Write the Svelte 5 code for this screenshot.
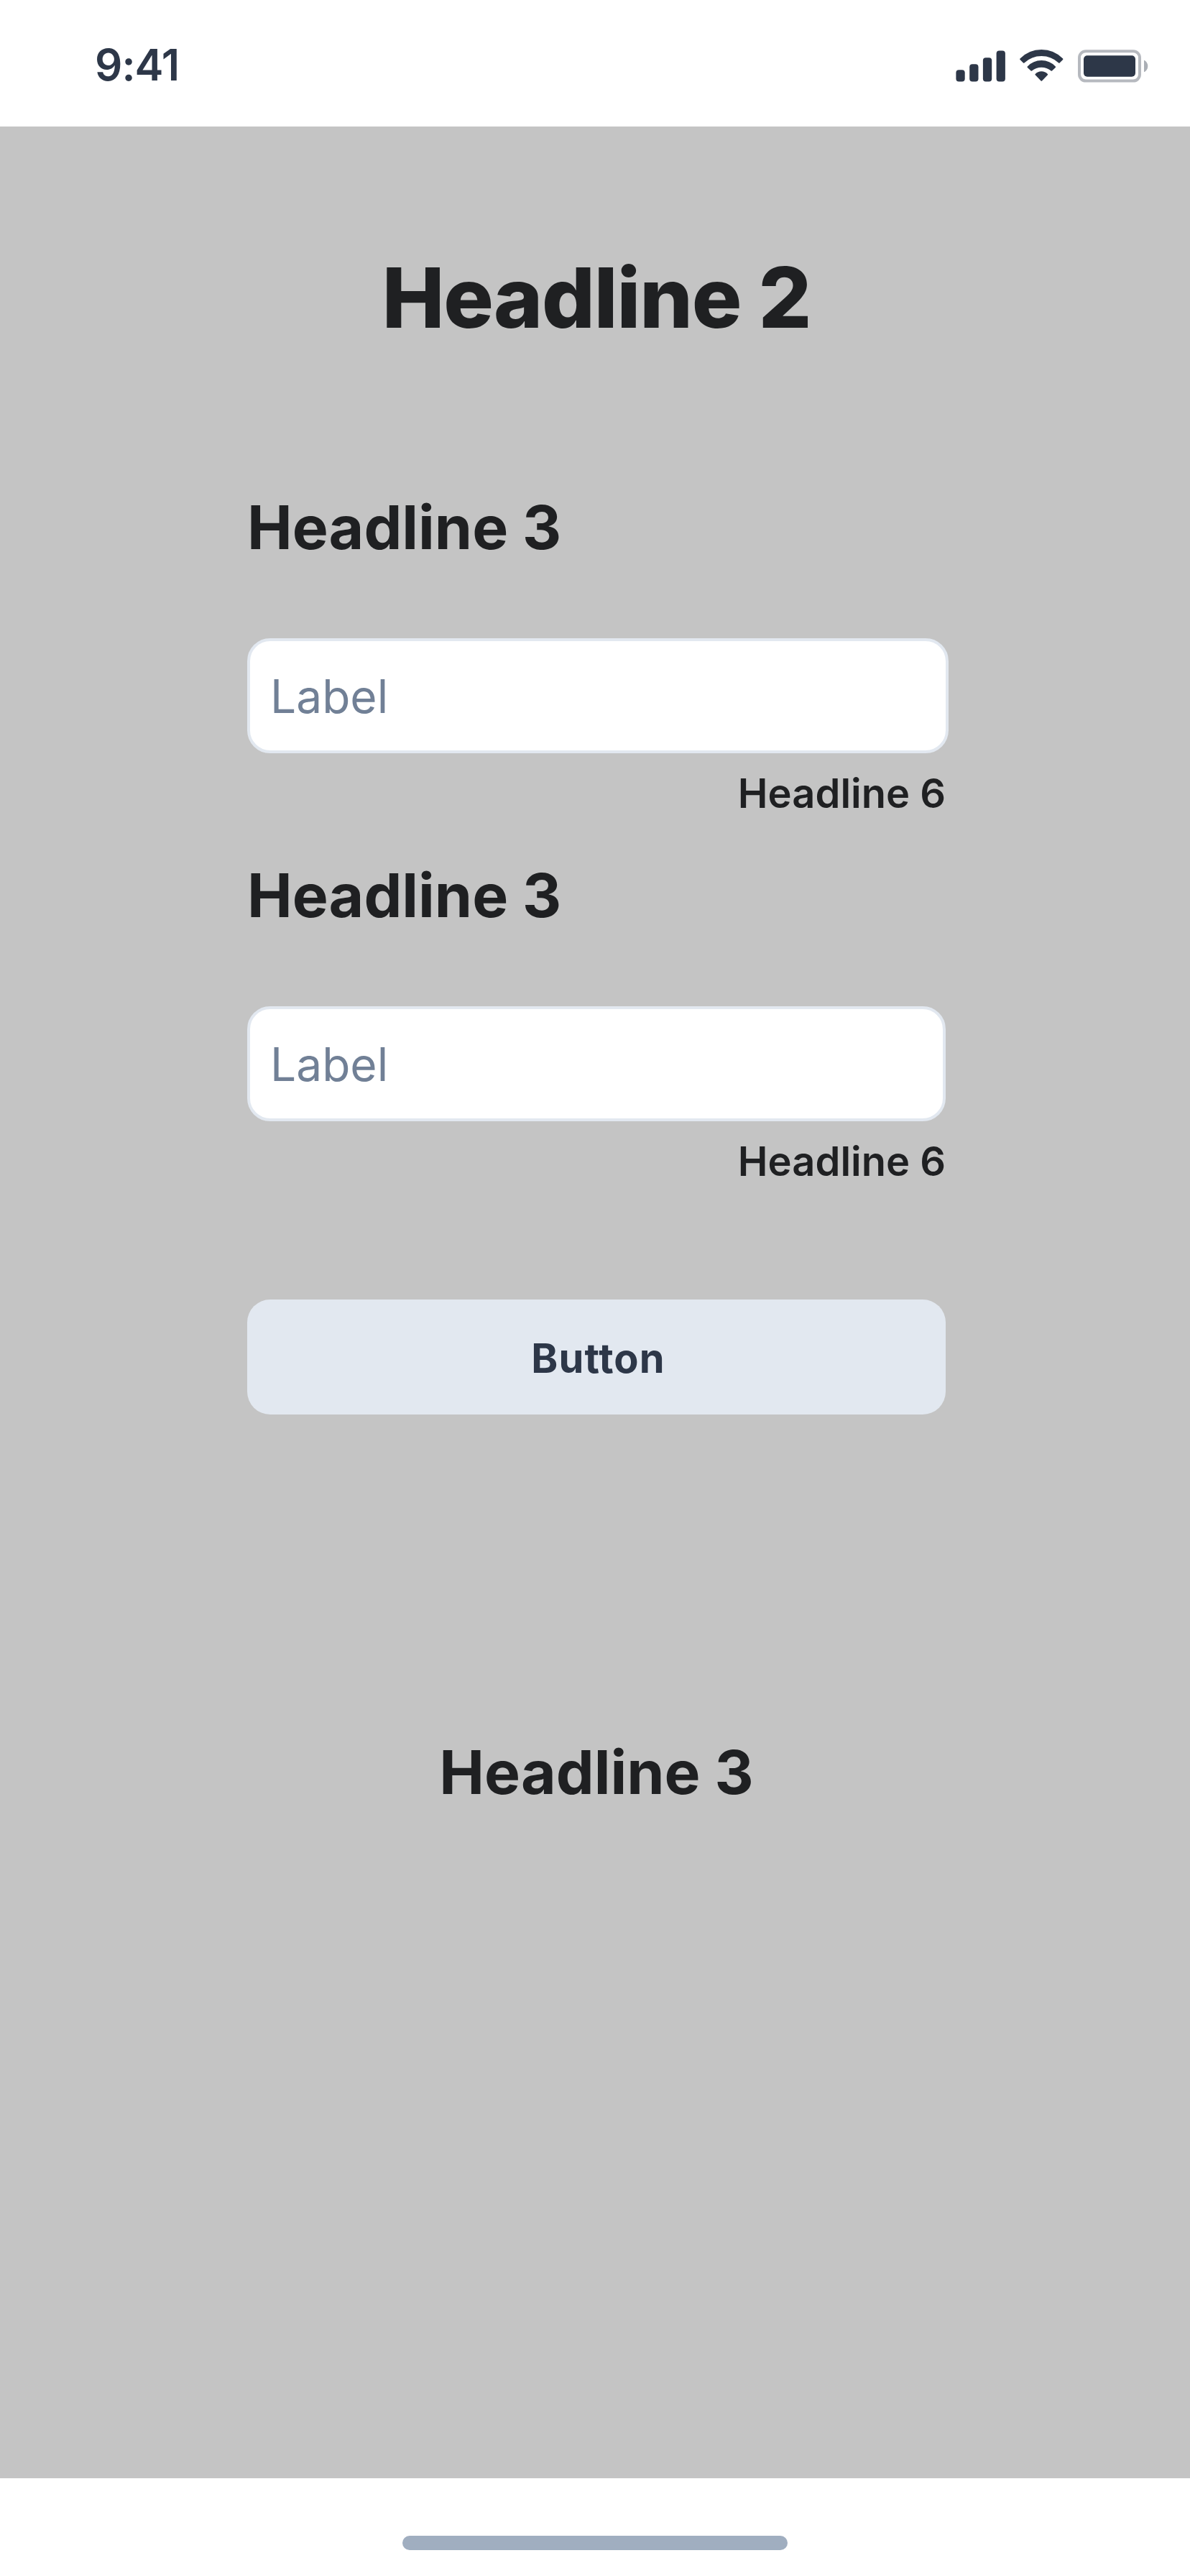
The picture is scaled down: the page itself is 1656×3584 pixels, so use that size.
<script>
  const fields = [
    { title: 'Headline 3', label: 'Label', hint: 'Headline 6', wide: true },
    { title: 'Headline 3', label: 'Label', hint: 'Headline 6', wide: false }
  ];
</script>

<div class="screen">
  <header class="status">
    <span class="time">9:41</span>
    <div class="indicators">
      <svg class="signal" width="69" height="44" viewBox="0 0 69 44" aria-hidden="true">
        <rect x="0.4" y="27.2" width="12.3" height="16.2" rx="4" />
        <rect x="19.2" y="19.2" width="12.3" height="24.2" rx="4" />
        <rect x="37.9" y="10.2" width="12.3" height="33.2" rx="4" />
        <rect x="56.6" y="0.4" width="12.3" height="43" rx="4" />
      </svg>
      <svg class="wifi" width="63" height="46" viewBox="0 0 63 46" aria-hidden="true">
        <path d="M2.2 14.3A40.8 40.8 0 0 1 60.4 14.3L55.9 18.8A35.8 35.8 0 0 0 6.7 18.8Z" />
        <path d="M12.5 25.2A25.6 25.6 0 0 1 50.1 25.2L45.3 29.8A21.8 21.8 0 0 0 17.3 29.8Z" />
        <path d="M23.4 35.6A11.1 11.1 0 0 1 39.2 35.6L31.3 43.8Z" />
      </svg>
      <svg class="battery" width="98" height="46" viewBox="0 0 98 46" aria-hidden="true">
        <rect class="shell" x="2" y="2.2" width="84" height="41.4" rx="9" />
        <rect class="charge" x="8" y="8.2" width="72" height="29.6" rx="5" />
        <path class="cap" d="M92 14.7C95.2 16 97.3 19.3 97.3 23S95.2 30 92 31.3Z" />
      </svg>
    </div>
  </header>

  <main>
    <h2>Headline 2</h2>
    {#each fields as field}
      <section class="field">
        <h3>{field.title}</h3>
        <div class="input" class:wide={field.wide}>{field.label}</div>
        <h6>{field.hint}</h6>
      </section>
    {/each}
    <button type="button">Button</button>
    <h3 class="footer-title">Headline 3</h3>
  </main>

  <footer><div class="home"></div></footer>
</div>

<style>
  .screen {
    display: flex;
    flex-direction: column;
    width: 1656px;
    height: 3584px;
    background: #fff;
    color: #1f2022;
    font-family: Inter, sans-serif;
  }
  .status {
    display: flex;
    flex: none;
    justify-content: space-between;
    align-items: flex-start;
    box-sizing: border-box;
    height: 176px;
    padding: 54px 58px 0 132px;
    color: #2d3748;
  }
  .time {
    font-size: 60px;
    font-weight: 600;
    line-height: 72px;
    letter-spacing: -0.96px;
  }
  .indicators {
    display: flex;
    align-items: flex-start;
    padding-top: 15px;
  }
  svg {
    display: block;
    fill: #2d3748;
  }
  .signal {
    margin: 1px 19px 0 0;
  }
  .wifi {
    margin: -1px 19px 0 0;
    stroke: #2d3748;
    stroke-width: 2;
    stroke-linejoin: round;
  }
  .shell {
    fill: none;
    stroke: #2d3748;
    stroke-width: 4;
    opacity: 0.35;
  }
  .cap {
    opacity: 0.4;
  }
  main {
    display: flex;
    flex: 1;
    flex-direction: column;
    padding: 168px 340px 0 344px;
    background: #c4c4c4;
  }
  h2,
  h3,
  h6 {
    margin: 0;
  }
  h2 {
    margin-bottom: 199px;
    font-size: 116px;
    font-weight: 800;
    line-height: 140px;
    letter-spacing: -0.01em;
    text-align: center;
  }
  h3 {
    font-size: 84px;
    font-weight: 700;
    line-height: 101px;
  }
  h6 {
    margin-top: 22px;
    font-size: 56px;
    font-weight: 600;
    line-height: 68px;
    text-align: right;
  }
  .field {
    height: 512px;
  }
  .input {
    box-sizing: border-box;
    height: 160px;
    margin-top: 104px;
    padding: 38px 28px 0;
    border: 4px solid #e2e8f0;
    border-radius: 32px;
    background: #fff;
    color: #718096;
    font-size: 64px;
    line-height: 77px;
  }
  .wide {
    margin-right: -4px;
  }
  button {
    flex: none;
    height: 160px;
    margin-top: 101px;
    padding: 4px 0 0 5px;
    border: 0;
    border-radius: 32px;
    background: #e2e8f0;
    color: #2d3748;
    font: 700 56px/68px Inter, sans-serif;
    letter-spacing: 0.02em;
  }
  .footer-title {
    margin-top: 447px;
    text-align: center;
  }
  footer {
    display: flex;
    flex: none;
    justify-content: center;
    box-sizing: border-box;
    height: 136px;
    padding-top: 80px;
  }
  .home {
    width: 536px;
    height: 20px;
    border-radius: 10px;
    background: #a0aec0;
  }
</style>
